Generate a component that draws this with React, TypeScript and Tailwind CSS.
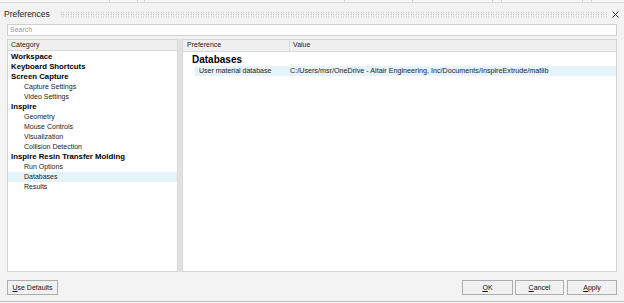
import React from "react";

type Item = { label: string; level: 0 | 1; selected?: boolean };

const categories: Item[] = [
  { label: "Workspace", level: 0 },
  { label: "Keyboard Shortcuts", level: 0 },
  { label: "Screen Capture", level: 0 },
  { label: "Capture Settings", level: 1 },
  { label: "Video Settings", level: 1 },
  { label: "Inspire", level: 0 },
  { label: "Geometry", level: 1 },
  { label: "Mouse Controls", level: 1 },
  { label: "Visualization", level: 1 },
  { label: "Collision Detection", level: 1 },
  { label: "Inspire Resin Transfer Molding", level: 0 },
  { label: "Run Options", level: 1 },
  { label: "Databases", level: 1, selected: true },
  { label: "Results", level: 1 },
];

const Btn = ({ hot, rest, className }: { hot: string; rest: string; className: string }) => (
  <button
    className={`h-[15px] border border-[#adadad] bg-[#f1f1f1] text-[7px] text-[#111] leading-none flex items-center justify-center ${className}`}
  >
    <span className="underline underline-offset-1">{hot}</span>
    {rest}
  </button>
);

export default function App() {
  return (
    <div className="w-[624px] h-[303px] bg-[#f3f3f3] flex flex-col font-['Liberation_Sans',Arial,sans-serif] text-[#1a1a1a] overflow-hidden">
      {/* window behind */}
      <div className="h-[3px] border-b border-[#dcdcdc] bg-[#f7f7f7] flex">
        <div className="w-[110px] border-r border-[#d8d8d8]" />
        <div className="w-[28px] border-r border-[#d8d8d8]" />
        <div className="w-[7px] border-r border-[#d8d8d8]" />
        <div className="w-[200px] border-r border-[#d8d8d8]" />
        <div className="w-[68px] border-r border-[#d8d8d8]" />
        <div className="w-[80px] border-r border-[#d8d8d8]" />
        <div className="w-[9px] border-r border-[#d8d8d8]" />
        <div className="w-[81px] border-r border-[#d8d8d8]" />
        <div className="w-[9px] border-r border-[#d8d8d8]" />
      </div>

      {/* title */}
      <div className="h-[21px] flex items-center pl-[4px] pr-[5px] pt-[1px]">
        <span className="text-[8.5px] text-[#222]">Preferences</span>
        <div className="flex-1 ml-[10px] mr-[5px] h-[7px] bg-[radial-gradient(circle,#a4a4a4_0.7px,transparent_0.8px)] bg-[length:2.5px_2.4px]" />
        <svg width="7" height="7" viewBox="0 0 7 7" className="shrink-0">
          <path d="M0.5 0.5 L6.5 6.5 M6.5 0.5 L0.5 6.5" stroke="#333" strokeWidth="1" />
        </svg>
      </div>

      {/* search */}
      <div className="mx-[7px] h-[12px] border border-[#cfcfcf] bg-white flex items-center px-[2px]">
        <span className="text-[7px] text-[#9a9a9a]">Search</span>
      </div>

      {/* panels */}
      <div className="mt-[3px] mx-[7px] h-[233px] flex">
        <div className="w-[171px] border border-[#d4d4d4] bg-white flex flex-col">
          <div className="h-[11px] bg-[#f0f0f0] border-b border-[#dadada] flex items-center px-[3px] text-[7px] text-[#222]">
            Category
          </div>
          <div className="pt-[1px] flex flex-col">
            {categories.map((c) => (
              <div
                key={c.label}
                className={`h-[10px] flex items-center ${c.selected ? "bg-[#e5f3fb]" : ""} ${
                  c.level === 0 ? "pl-[3px] text-[7.8px] font-bold text-black" : "pl-[16px] text-[7px] text-[#222]"
                }`}
              >
                {c.label}
              </div>
            ))}
          </div>
        </div>

        <div className="w-[4px] bg-[#dedede] border-x border-[#e8e8e8]" />

        <div className="flex-1 border border-[#d4d4d4] bg-white flex flex-col">
          <div className="h-[12px] bg-[#f0f0f0] border-b border-[#dadada] flex text-[7px] text-[#222]">
            <div className="w-[107px] border-r border-[#dadada] flex items-center pl-[4px]">Preference</div>
            <div className="flex-1 flex items-center pl-[3px]">Value</div>
          </div>
          <div className="h-[14px] flex items-center pl-[9px] text-[10px] font-bold text-black">Databases</div>
          <div className="ml-[12px] h-[10px] bg-[#e5f3fb] flex items-center text-[#222]">
            <div className="w-[95px] pl-[4px] text-[7px]">User material database</div>
            <div className="text-[7.2px]">C:/Users/msr/OneDrive - Altair Engineering, Inc/Documents/InspireExtrude/matlib</div>
          </div>
        </div>
      </div>

      {/* buttons */}
      <div className="mt-[8px] mx-[7px] flex items-center">
        <Btn hot="U" rest="se Defaults" className="w-[51px]" />
        <div className="flex-1" />
        <Btn hot="O" rest="K" className="w-[51px]" />
        <Btn hot="C" rest="ancel" className="w-[49px] ml-[2px]" />
        <Btn hot="A" rest="pply" className="w-[50px] ml-[3px]" />
      </div>

      <div className="mt-[6px] border-b border-[#bdbdbd]" />
      <div className="flex-1 bg-[#fafafa]" />
    </div>
  );
}
